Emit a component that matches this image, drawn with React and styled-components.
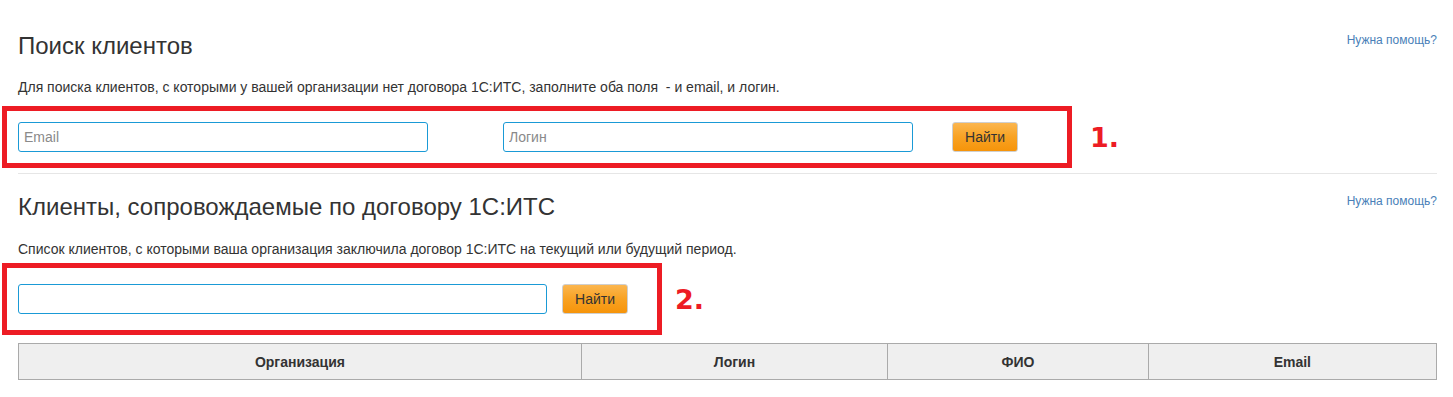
import React from 'react';
import styled, { createGlobalStyle } from 'styled-components';

const GlobalStyle = createGlobalStyle`
  body {
    margin: 0;
    background: #fff;
    font-family: "Liberation Sans", Arial, sans-serif;
    color: #333;
  }
`;

const Page = styled.div`
  width: 1419px;
  padding: 30px 0 0 18px;
`;

const HeaderRow = styled.div`
  display: flex;
  justify-content: space-between;
  align-items: flex-start;
`;

const Title = styled.h2`
  margin: 0;
  font-size: 24px;
  font-weight: normal;
  line-height: 32px;
  color: #333;
`;

const HelpLink = styled.a`
  margin-top: 3px;
  font-size: 12px;
  line-height: 14px;
  color: #4a7fb8;
  text-decoration: none;
`;

const Description = styled.p`
  margin: ${p => p.$top}px 0 0;
  font-size: 14px;
  line-height: 18px;
  color: #333;
`;

const AnnotatedRow = styled.div`
  display: flex;
  align-items: center;
  margin-top: ${p => p.$top}px;
`;

const Marker = styled.div`
  box-sizing: border-box;
  width: ${p => p.$width}px;
  margin-left: -16px;
  padding: ${p => p.$pad} 0 ${p => p.$pad} 11px;
  border: 5px solid #ed1c24;
  display: flex;
  align-items: center;
`;

const MarkerLabel = styled.span`
  margin-left: ${p => p.$gap}px;
  font-family: "DejaVu Sans", sans-serif;
  font-size: 27px;
  font-weight: bold;
  color: #ed1c24;
`;

const Input = styled.input`
  box-sizing: border-box;
  width: ${p => p.$width}px;
  height: 30px;
  margin-right: ${p => p.$gap}px;
  padding: 0 5px;
  border: 1px solid #1a9ad6;
  border-radius: 3px;
  font-family: "Liberation Sans", Arial, sans-serif;
  font-size: 14px;
  color: #333;
  outline: none;
  &::placeholder {
    color: #8a8a8a;
  }
`;

const FindButton = styled.button`
  box-sizing: border-box;
  width: 66px;
  height: 30px;
  padding: 0;
  border: 1px solid #cfcfcf;
  border-radius: 3px;
  background: linear-gradient(to bottom, #fbb64f 0%, #f8a223 50%, #f6940a 100%);
  font-family: "Liberation Sans", Arial, sans-serif;
  font-size: 14px;
  color: #333;
`;

const Divider = styled.hr`
  margin: 5px 0 17px;
  border: 0;
  border-top: 1px solid #e6e6e6;
`;

const Table = styled.table`
  width: 100%;
  margin-top: 8px;
  border-collapse: collapse;
`;

const HeadCell = styled.th`
  width: ${p => p.$width}px;
  height: 35px;
  padding: 0;
  border: 1px solid #aaa;
  background: #efefef;
  font-size: 14px;
  font-weight: bold;
  color: #333;
  text-align: center;
`;

const columns = [
  { title: 'Организация', width: 563 },
  { title: 'Логин', width: 306 },
  { title: 'ФИО', width: 260 },
  { title: 'Email', width: 288 },
];

export default function App() {
  return (
    <>
      <GlobalStyle />
      <Page>
        <HeaderRow>
          <Title>Поиск клиентов</Title>
          <HelpLink href="#">Нужна помощь?</HelpLink>
        </HeaderRow>
        <Description $top={16}>
          Для поиска клиентов, с которыми у вашей организации нет договора 1С:ИТС, заполните оба поля&nbsp; - и email, и логин.
        </Description>
        <AnnotatedRow $top={10}>
          <Marker $width={1070} $pad="11px">
            <Input placeholder="Email" $width={410} $gap={75} />
            <Input placeholder="Логин" $width={410} $gap={39} />
            <FindButton>Найти</FindButton>
          </Marker>
          <MarkerLabel $gap={18}>1.</MarkerLabel>
        </AnnotatedRow>
        <Divider />

        <HeaderRow>
          <Title>Клиенты, сопровождаемые по договору 1С:ИТС</Title>
          <HelpLink href="#">Нужна помощь?</HelpLink>
        </HeaderRow>
        <Description $top={17}>
          Список клиентов, с которыми ваша организация заключила договор 1С:ИТС на текущий или будущий период.
        </Description>
        <AnnotatedRow $top={5}>
          <Marker $width={660} $pad="16px">
            <Input $width={529} $gap={15} />
            <FindButton>Найти</FindButton>
          </Marker>
          <MarkerLabel $gap={13}>2.</MarkerLabel>
        </AnnotatedRow>

        <Table>
          <thead>
            <tr>
              {columns.map(col => (
                <HeadCell key={col.title} $width={col.width}>{col.title}</HeadCell>
              ))}
            </tr>
          </thead>
        </Table>
      </Page>
    </>
  );
}
